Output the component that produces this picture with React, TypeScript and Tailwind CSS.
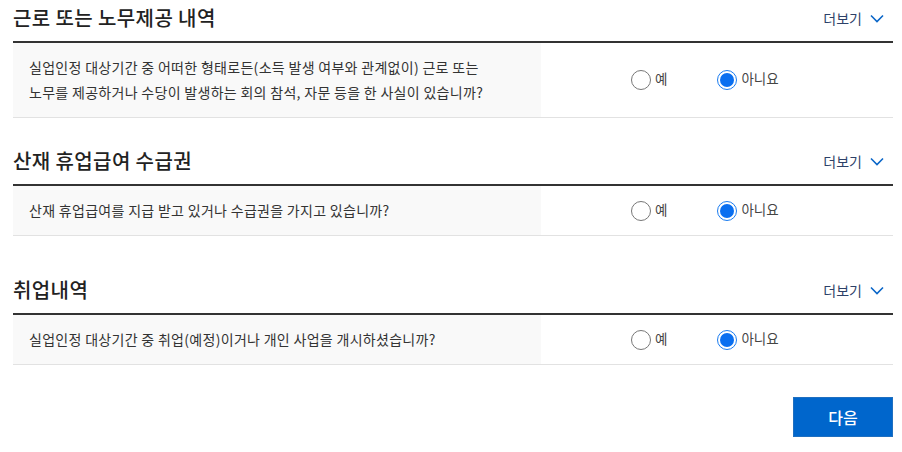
import React, { useState } from 'react'

type Section = {
  id: string
  title: string
  question: React.ReactNode
  gapTop: string
}

const SECTIONS: Section[] = [
  {
    id: 'work',
    title: '근로 또는 노무제공 내역',
    question: (
      <>
        실업인정 대상기간 중 어떠한 형태로든(소득 발생 여부와 관계없이) 근로 또는
        <br />
        노무를 제공하거나 수당이 발생하는 회의 참석, 자문 등을 한 사실이 있습니까?
      </>
    ),
    gapTop: 'mt-0',
  },
  {
    id: 'injury',
    title: '산재 휴업급여 수급권',
    question: '산재 휴업급여를 지급 받고 있거나 수급권을 가지고 있습니까?',
    gapTop: 'mt-[25px]',
  },
  {
    id: 'job',
    title: '취업내역',
    question: '실업인정 대상기간 중 취업(예정)이거나 개인 사업을 개시하셨습니까?',
    gapTop: 'mt-[36px]',
  },
]

function Chevron() {
  return (
    <svg width="14" height="9" viewBox="0 0 14 9" fill="none">
      <path d="M1 1.5l6 6 6-6" stroke="#0a66c8" strokeWidth="1.6" />
    </svg>
  )
}

function Radio({ checked, label, onClick }: { checked: boolean; label: string; onClick: () => void }) {
  return (
    <button className="flex items-center cursor-pointer" onClick={onClick}>
      {checked ? (
        <span className="w-[20px] h-[20px] rounded-full border border-[#1a7cf0] flex items-center justify-center">
          <span className="w-[14px] h-[14px] rounded-full bg-[#0a6ff0]" />
        </span>
      ) : (
        <span className="w-[20px] h-[20px] rounded-full border border-[#777]" />
      )}
      <span className="ml-[4px] -mt-[3px] text-[13.5px] text-[#444]">{label}</span>
    </button>
  )
}

function QuestionSection({ section }: { section: Section }) {
  const [answer, setAnswer] = useState<'yes' | 'no'>('no')

  return (
    <section className={section.gapTop}>
      {/* Title row */}
      <div className="h-[36px] flex items-center justify-between">
        <h2 className="text-[20px] font-medium text-[#222] tracking-[0.4px]">{section.title}</h2>
        <button className="flex items-center gap-[8px] pr-[9px] text-[14px] text-[#2d4168]">
          더보기
          <Chevron />
        </button>
      </div>

      {/* Question row */}
      <div className="mt-[5px] border-t-2 border-[#333] border-b border-b-[#e2e2e2] flex">
        <div className="w-[528px] bg-[#f9f9f9] pl-[16px] py-[12px] text-[14px] leading-[25px] tracking-[0.3px] text-[#333]">
          {section.question}
        </div>
        <div className="flex items-center pl-[90px]">
          <Radio checked={answer === 'yes'} label="예" onClick={() => setAnswer('yes')} />
          <div className="ml-[50px]">
            <Radio checked={answer === 'no'} label="아니요" onClick={() => setAnswer('no')} />
          </div>
        </div>
      </div>
    </section>
  )
}

export default function App() {
  return (
    <div
      className="w-[902px] h-[452px] bg-white pl-[13px] pr-[9px]"
      style={{ fontFamily: '"Noto Sans CJK KR", "Noto Sans", sans-serif' }}
    >
      {SECTIONS.map(s => (
        <QuestionSection key={s.id} section={s} />
      ))}

      <div className="flex justify-end mt-[32px]">
        <button className="w-[100px] h-[40px] bg-[#0066cc] border border-[#1f6fc0] text-white text-[16px] font-medium">
          다음
        </button>
      </div>
    </div>
  )
}
